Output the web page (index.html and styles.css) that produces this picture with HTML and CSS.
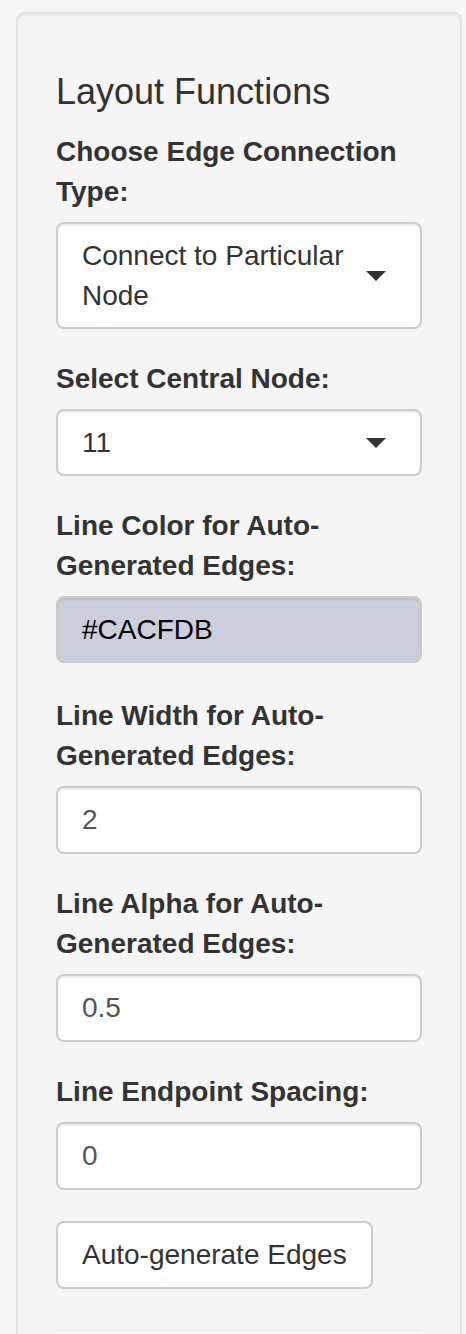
FILE: index.html
```html
<!DOCTYPE html>
<html>
<head>
<meta charset="utf-8">
<link rel="stylesheet" href="styles.css">
</head>
<body>
<div class="page">
  <div class="well">
    <h4 class="title">Layout Functions</h4>
    <div class="form-group">
      <label class="label">Choose Edge Connection Type:</label>
      <div class="select"><span class="select-text">Connect to Particular Node</span><span class="caret"></span></div>
    </div>
    <div class="form-group">
      <label class="label">Select Central Node:</label>
      <div class="select"><span class="select-text">11</span><span class="caret"></span></div>
    </div>
    <div class="form-group color-group">
      <label class="label">Line Color for Auto-Generated Edges:</label>
      <div class="color-input">#CACFDB</div>
    </div>
    <div class="form-group">
      <label class="label">Line Width for Auto-Generated Edges:</label>
      <div class="form-control">2</div>
    </div>
    <div class="form-group">
      <label class="label">Line Alpha for Auto-Generated Edges:</label>
      <div class="form-control">0.5</div>
    </div>
    <div class="form-group">
      <label class="label">Line Endpoint Spacing:</label>
      <div class="form-control">0</div>
    </div>
    <button class="btn">Auto-generate Edges</button>
    <hr class="rule">
  </div>
</div>
</body>
</html>
```

FILE: styles.css
```css
html, body {
  margin: 0;
  padding: 0;
  background: #f7f7f7;
}
body {
  font-family: "Liberation Sans", Arial, Helvetica, sans-serif;
  font-size: 28px;
  line-height: 40px;
  color: #333;
}
.page {
  padding: 12px 4px 0 16px;
}
.well {
  background: #f5f5f5;
  border: 2px solid #e3e3e3;
  border-radius: 8px;
  box-shadow: inset 0 2px 2px rgba(0,0,0,0.05);
  padding: 38px 38px 0 38px;
  min-height: 1400px;
}
.title {
  font-size: 36px;
  font-weight: 400;
  line-height: 1.1;
  margin: 20px 0 20px;
  color: #333;
}
.form-group {
  margin-bottom: 30px;
}
.color-group {
  margin-bottom: 33px;
}
.label {
  display: inline-block;
  font-weight: 700;
  margin-bottom: 10px;
  max-width: 100%;
}
.select {
  position: relative;
  background: #fff;
  border: 2px solid #ccc;
  border-radius: 8px;
  padding: 12px 48px 11px 24px;
  box-shadow: inset 0 2px 2px rgba(0,0,0,0.075);
  color: #333;
}
.select-text {
  display: block;
}
.caret {
  position: absolute;
  right: 34px;
  top: 50%;
  margin-top: -4px;
  width: 0;
  height: 0;
  border-style: solid;
  border-width: 10px 10px 0 10px;
  border-color: #333 transparent transparent transparent;
}
.color-input {
  background: #CACFDB;
  border: 2px solid #ccc;
  border-radius: 8px;
  padding: 12px 24px 11px;
  color: #000;
  box-shadow: inset 0 2px 2px rgba(0,0,0,0.075);
}
.form-control {
  background: #fff;
  border: 2px solid #ccc;
  border-radius: 8px;
  padding: 12px 24px;
  height: 68px;
  box-sizing: border-box;
  color: #555;
  box-shadow: inset 0 2px 2px rgba(0,0,0,0.075);
}
.btn {
  display: inline-block;
  font-family: inherit;
  font-size: 28px;
  line-height: 40px;
  color: #333;
  background: #fff;
  border: 2px solid #ccc;
  border-radius: 8px;
  padding: 12px 24px;
  margin-top: 1px;
}
.rule {
  margin: 40px 0 40px;
  border: 0;
  border-top: 2px solid #eee;
}
```
